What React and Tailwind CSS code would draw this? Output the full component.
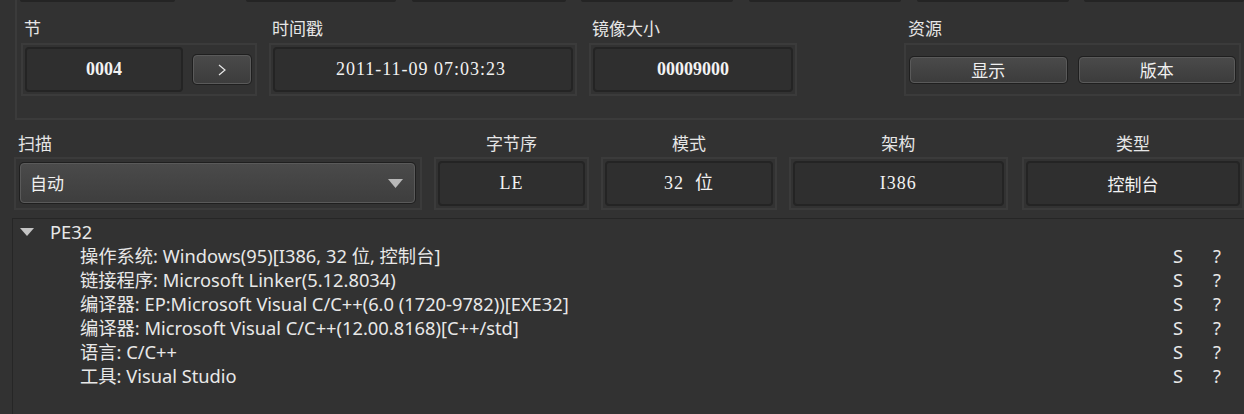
const cjk = "font-['Noto_Sans_CJK_SC',sans-serif]";
const serif = "font-['Liberation_Serif','Noto_Sans_CJK_SC',serif]";
const sans = "font-['Noto_Sans','Noto_Sans_CJK_SC',sans-serif]";

function Group({ className = "", children }) {
  return (
    <div className={`flex h-[53px] items-stretch border-2 border-[#3b3b3b] ${className}`}>
      {children}
    </div>
  );
}

function Field({ className = "", children }) {
  return (
    <div
      className={`flex items-center justify-center rounded-[4px] border-2 border-[#242424] bg-[#2f2f2f] text-[#f2f2f2] ${className}`}
    >
      {children}
    </div>
  );
}

function Btn({ className = "", children }) {
  return (
    <div
      className={`flex items-center justify-center self-center rounded-[4px] border border-[#5a5a5a] bg-gradient-to-b from-[#4a4a4a] to-[#3c3c3c] shadow-[0_0_0_1px_#1f1f1f] text-[#f0f0f0] ${className}`}
    >
      {children}
    </div>
  );
}

function Label({ className = "", children }) {
  return (
    <div className={`h-[24px] text-[17px] leading-[24px] text-[#e6e6e6] ${cjk} ${className}`}>
      {children}
    </div>
  );
}

const rows = [
  "操作系统: Windows(95)[I386, 32 位, 控制台]",
  "链接程序: Microsoft Linker(5.12.8034)",
  "编译器: EP:Microsoft Visual C/C++(6.0 (1720-9782))[EXE32]",
  "编译器: Microsoft Visual C/C++(12.00.8168)[C++/std]",
  "语言: C/C++",
  "工具: Visual Studio",
];

export default function App() {
  return (
    <div className="flex h-[414px] w-[1244px] flex-col overflow-hidden bg-[#323232]">
      {/* upper frame */}
      <div className="ml-[15px] h-[120px] shrink-0 border-b-2 border-l-2 border-[#3b3b3b]">
        {/* bottoms of the fields above */}
        <div className="flex h-[2px]">
          <div className="ml-[3px] w-[155px] rounded-b bg-[#242424]" />
          <div className="ml-[71px] w-[151px] rounded-b bg-[#242424]" />
          <div className="ml-[16px] w-[154px] rounded-b bg-[#242424]" />
          <div className="ml-[15px] w-[152px] rounded-b bg-[#242424]" />
          <div className="ml-[16px] w-[152px] rounded-b bg-[#242424]" />
          <div className="ml-[16px] w-[153px] rounded-b bg-[#242424]" />
          <div className="ml-[15px] w-[160px] rounded-b bg-[#242424]" />
        </div>

        <div className="flex pl-[4px] pt-[14px]">
          <div className="w-[236px]">
            <Label className="pl-[3px]">节</Label>
            <Group className="mt-[3px] p-[2px]">
              <Field className={`w-[158px] text-[18px] font-bold ${serif}`}>0004</Field>
              <Btn className="ml-[10px] h-[29px] w-[58px]">
                <svg width="8" height="12" viewBox="0 0 8 12">
                  <polyline points="1,1 7,6 1,11" fill="none" stroke="#e8e8e8" strokeWidth="1.2" />
                </svg>
              </Btn>
            </Group>
          </div>

          <div className="ml-[12px] w-[308px]">
            <Label className="pl-[3px]">时间戳</Label>
            <Group className="mt-[3px] p-[2px]">
              <Field className={`flex-1 pr-[4px] text-[18px] tracking-[1px] ${serif}`}>2011-11-09 07:03:23</Field>
            </Group>
          </div>

          <div className="ml-[12px] w-[208px]">
            <Label className="pl-[3px]">镜像大小</Label>
            <Group className="mt-[3px] p-[2px]">
              <Field className={`flex-1 text-[18px] font-bold ${serif}`}>00009000</Field>
            </Group>
          </div>

          <div className="ml-[107px] w-[337px]">
            <Label className="pl-[4px]">资源</Label>
            <Group className="mt-[3px] gap-[12px] px-[4px]">
              <Btn className={`h-[26px] flex-1 text-[17px] ${cjk}`}>显示</Btn>
              <Btn className={`h-[26px] flex-1 text-[17px] ${cjk}`}>版本</Btn>
            </Group>
          </div>
        </div>
      </div>

      {/* second row */}
      <div className="flex shrink-0 pl-[14px] pt-[11px]">
        <div className="w-[409px]">
          <Label className="pl-[4px]">扫描</Label>
          <Group className="mt-[2px] pb-[5px] pl-[4px] pr-[5px] pt-[4px]">
            <div className="flex flex-1 items-center justify-between rounded-[4px] border border-[#5a5a5a] bg-gradient-to-b from-[#4a4a4a] to-[#3e3e3e] pl-[9px] pr-[11px] shadow-[0_0_0_1px_#1f1f1f]">
              <span className={`text-[17px] text-[#f0f0f0] ${cjk}`}>自动</span>
              <svg width="15" height="9" viewBox="0 0 15 9">
                <polygon points="0,0 15,0 7.5,9" fill="#b8b8b8" />
              </svg>
            </div>
          </Group>
        </div>

        <div className="ml-[12px] w-[156px]">
          <Label className="text-center">字节序</Label>
          <Group className="mt-[2px] p-[2px]">
            <Field className={`flex-1 text-[18px] tracking-[1px] ${serif}`}>LE</Field>
          </Group>
        </div>

        <div className="ml-[12px] w-[176px]">
          <Label className="text-center">模式</Label>
          <Group className="mt-[2px] p-[2px]">
            <Field className={`flex-1 text-[18px] tracking-[1px] ${serif}`}>32&nbsp;&nbsp;位</Field>
          </Group>
        </div>

        <div className="ml-[12px] w-[220px]">
          <Label className="text-center">架构</Label>
          <Group className="mt-[2px] p-[2px]">
            <Field className={`flex-1 text-[18px] tracking-[1px] ${serif}`}>I386</Field>
          </Group>
        </div>

        <div className="ml-[14px] w-[222px] shrink-0">
          <Label className="text-center">类型</Label>
          <Group className="mt-[2px] p-[2px]">
            <Field className={`flex-1 text-[17px] ${cjk}`}>控制台</Field>
          </Group>
        </div>
      </div>

      {/* result tree */}
      <div className={`ml-[12px] mt-[8px] flex-1 border-l border-t border-[#262626] pt-[1px] text-[18.3px] text-[#e8e8e8] ${sans}`}>
        <div className="flex h-[24px] items-center pl-[7px]">
          <svg width="14" height="8" viewBox="0 0 14 8">
            <polygon points="0,0 14,0 7,8" fill="#c4c4c4" />
          </svg>
          <span className="ml-[16px] leading-[24px]">PE32</span>
        </div>
        {rows.map((r, i) => (
          <div key={i} className="flex h-[24px] items-center pl-[67px] leading-[24px]">
            <span className="flex-1 whitespace-nowrap">{r}</span>
            <span className="w-[40px]">S</span>
            <span className="w-[31px]">?</span>
          </div>
        ))}
      </div>
    </div>
  );
}
